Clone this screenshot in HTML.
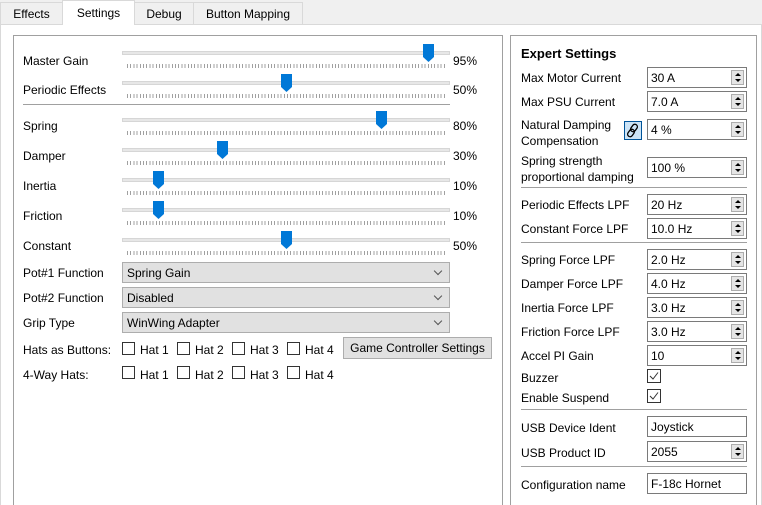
<!DOCTYPE html>
<html><head><meta charset="utf-8"><style>
*{box-sizing:border-box;margin:0;padding:0}
html,body{width:762px;height:505px;overflow:hidden}
body{background:#f0f0f0;font-family:"Liberation Sans",sans-serif;font-size:12px;color:#000;position:relative}
.a{position:absolute}
.t{position:absolute;white-space:nowrap;line-height:14px;margin-top:1px}
.tab{position:absolute;top:2px;height:22px;border:1px solid #d9d9d9;border-bottom:none;background:#f0f0f0;text-align:center;line-height:22px;font-size:12px}
.groove{position:absolute;left:122px;width:328px;height:4px;background:#e7e7e7;border:1px solid #d6d6d6}
.ticks{position:absolute;left:127px;width:320px;height:4px;background:repeating-linear-gradient(90deg,#a0a0a0 0 1px,transparent 1px 3.2px)}
.combo{position:absolute;left:122px;width:328px;height:21px;background:#e1e1e1;border:1px solid #adadad;padding-left:4px;line-height:20px}
.combo:after{content:"";position:absolute;right:8px;top:5px;width:5px;height:5px;border-right:1px solid #555;border-bottom:1px solid #555;transform:rotate(45deg)}
.cb{position:absolute;width:13px;height:13px;border:1px solid #333;background:#fff}
.spin{position:absolute;left:647px;width:100px;height:21px;border:1px solid #7a7a7a;background:#fff;padding-left:3px;line-height:20px}
.spin i{position:absolute;right:2px;top:2px;width:13px;height:15px;border:1px solid #adadad;background:#e5e5e5}
.spin i:before{content:"";position:absolute;left:3px;top:2px;border-left:3px solid transparent;border-right:3px solid transparent;border-bottom:3px solid #000}
.spin i:after{content:"";position:absolute;left:3px;top:8px;border-left:3px solid transparent;border-right:3px solid transparent;border-top:3px solid #000}
.sep{position:absolute;height:1px;background:#a0a0a0}
</style></head><body>
<div class="a" style="left:0;top:24px;width:762px;height:481px;background:#fff;border:1px solid #d9d9d9;border-bottom:none"></div>
<div class="tab" style="left:0;width:63px">Effects</div>
<div class="tab" style="left:62px;width:73px;top:0;height:25px;background:#fff;line-height:25px">Settings</div>
<div class="tab" style="left:134px;width:60px">Debug</div>
<div class="tab" style="left:193px;width:110px">Button Mapping</div>

<div class="a" style="left:13px;top:35px;width:490px;height:475px;border:1px solid #a0a0a0"></div>
<div class="a" style="left:510px;top:35px;width:247px;height:475px;border:1px solid #a0a0a0"></div>

<div class="t" style="left:23px;top:53px">Master Gain</div><div class="groove" style="top:51px"></div><div class="ticks" style="top:64px"></div><div class="t" style="left:453px;top:53px">95%</div>
<div class="t" style="left:23px;top:82px">Periodic Effects</div><div class="groove" style="top:81px"></div><div class="ticks" style="top:94px"></div><div class="t" style="left:453px;top:82px">50%</div>
<div class="sep" style="left:23px;top:104px;width:427px"></div>
<div class="t" style="left:23px;top:118px">Spring</div><div class="groove" style="top:118px"></div><div class="ticks" style="top:131px"></div><div class="t" style="left:453px;top:118px">80%</div>
<div class="t" style="left:23px;top:148px">Damper</div><div class="groove" style="top:148px"></div><div class="ticks" style="top:161px"></div><div class="t" style="left:453px;top:148px">30%</div>
<div class="t" style="left:23px;top:178px">Inertia</div><div class="groove" style="top:178px"></div><div class="ticks" style="top:191px"></div><div class="t" style="left:453px;top:178px">10%</div>
<div class="t" style="left:23px;top:208px">Friction</div><div class="groove" style="top:208px"></div><div class="ticks" style="top:221px"></div><div class="t" style="left:453px;top:208px">10%</div>
<div class="t" style="left:23px;top:238px">Constant</div><div class="groove" style="top:238px"></div><div class="ticks" style="top:251px"></div><div class="t" style="left:453px;top:238px">50%</div>

<svg class="a" style="left:0;top:0" width="762" height="505">
<defs><path id="hd" d="M0 0H11V13L5.5 18L0 13Z" fill="#0078d7"/></defs>
<use href="#hd" x="423" y="44"/>
<use href="#hd" x="281" y="74"/>
<use href="#hd" x="376" y="111"/>
<use href="#hd" x="217" y="141"/>
<use href="#hd" x="153" y="171"/>
<use href="#hd" x="153" y="201"/>
<use href="#hd" x="281" y="231"/>
</svg>

<div class="t" style="left:23px;top:265px">Pot#1 Function</div><div class="combo" style="top:262px">Spring Gain</div>
<div class="t" style="left:23px;top:290px">Pot#2 Function</div><div class="combo" style="top:287px">Disabled</div>
<div class="t" style="left:23px;top:315px">Grip Type</div><div class="combo" style="top:312px">WinWing Adapter</div>

<div class="t" style="left:23px;top:342px">Hats as Buttons:</div>
<div class="cb" style="left:122px;top:342px"></div><div class="t" style="left:140px;top:342px">Hat 1</div>
<div class="cb" style="left:177px;top:342px"></div><div class="t" style="left:195px;top:342px">Hat 2</div>
<div class="cb" style="left:232px;top:342px"></div><div class="t" style="left:250px;top:342px">Hat 3</div>
<div class="cb" style="left:287px;top:342px"></div><div class="t" style="left:305px;top:342px">Hat 4</div>
<div class="a" style="left:343px;top:337px;width:149px;height:22px;background:#e1e1e1;border:1px solid #adadad;text-align:center;line-height:21px">Game Controller Settings</div>
<div class="t" style="left:23px;top:367px">4-Way Hats:</div>
<div class="cb" style="left:122px;top:366px"></div><div class="t" style="left:140px;top:367px">Hat 1</div>
<div class="cb" style="left:177px;top:366px"></div><div class="t" style="left:195px;top:367px">Hat 2</div>
<div class="cb" style="left:232px;top:366px"></div><div class="t" style="left:250px;top:367px">Hat 3</div>
<div class="cb" style="left:287px;top:366px"></div><div class="t" style="left:305px;top:367px">Hat 4</div>

<div class="t" style="left:521px;top:46px;font-weight:bold;font-size:13px">Expert Settings</div>
<div class="t" style="left:521px;top:70px">Max Motor Current</div><div class="spin" style="top:67px">30 A<i></i></div>
<div class="t" style="left:521px;top:94px">Max PSU Current</div><div class="spin" style="top:91px">7.0 A<i></i></div>
<div class="t" style="left:521px;top:117px">Natural Damping</div><div class="t" style="left:521px;top:133px">Compensation</div>
<div class="a" style="left:624px;top:121px;width:18px;height:19px;background:#cce4f7;border:1px solid #005499"></div>
<svg class="a" style="left:626px;top:123px" width="14" height="15"><g fill="none" stroke="#000" stroke-width="1.3"><rect x="5.5" y="1" width="5" height="8" rx="2.5" transform="rotate(35 8 5)"/><rect x="2.5" y="6" width="5" height="8" rx="2.5" transform="rotate(35 5 10)"/></g></svg>
<div class="spin" style="top:119px">4 %<i></i></div>
<div class="t" style="left:521px;top:153px">Spring strength</div><div class="t" style="left:521px;top:169px">proportional damping</div>
<div class="spin" style="top:157px">100 %<i></i></div>
<div class="sep" style="left:521px;top:187px;width:226px"></div>
<div class="t" style="left:521px;top:197px">Periodic Effects LPF</div><div class="spin" style="top:194px">20 Hz<i></i></div>
<div class="t" style="left:521px;top:221px">Constant Force LPF</div><div class="spin" style="top:218px">10.0 Hz<i></i></div>
<div class="sep" style="left:521px;top:242px;width:226px"></div>
<div class="t" style="left:521px;top:252px">Spring Force LPF</div><div class="spin" style="top:249px">2.0 Hz<i></i></div>
<div class="t" style="left:521px;top:276px">Damper Force LPF</div><div class="spin" style="top:273px">4.0 Hz<i></i></div>
<div class="t" style="left:521px;top:300px">Inertia Force LPF</div><div class="spin" style="top:297px">3.0 Hz<i></i></div>
<div class="t" style="left:521px;top:324px">Friction Force LPF</div><div class="spin" style="top:321px">3.0 Hz<i></i></div>
<div class="t" style="left:521px;top:348px">Accel PI Gain</div><div class="spin" style="top:345px">10<i></i></div>
<div class="t" style="left:521px;top:370px">Buzzer</div>
<div class="t" style="left:521px;top:390px">Enable Suspend</div>
<svg class="a" style="left:647px;top:369px" width="14" height="35"><g fill="#fff" stroke="#333"><rect x="0.5" y="0.5" width="13" height="13"/><rect x="0.5" y="20.5" width="13" height="13"/></g><g fill="none" stroke="#333" stroke-width="1"><path d="M3 7L6 10L11 3.5"/><path d="M3 27L6 30L11 23.5"/></g></svg>
<div class="sep" style="left:521px;top:409px;width:226px"></div>
<div class="t" style="left:521px;top:420px">USB Device Ident</div><div class="spin" style="top:416px">Joystick</div>
<div class="t" style="left:521px;top:445px">USB Product ID</div><div class="spin" style="top:441px">2055<i></i></div>
<div class="sep" style="left:521px;top:466px;width:226px"></div>
<div class="t" style="left:521px;top:477px">Configuration name</div><div class="spin" style="top:473px">F-18c Hornet</div>
</body></html>
